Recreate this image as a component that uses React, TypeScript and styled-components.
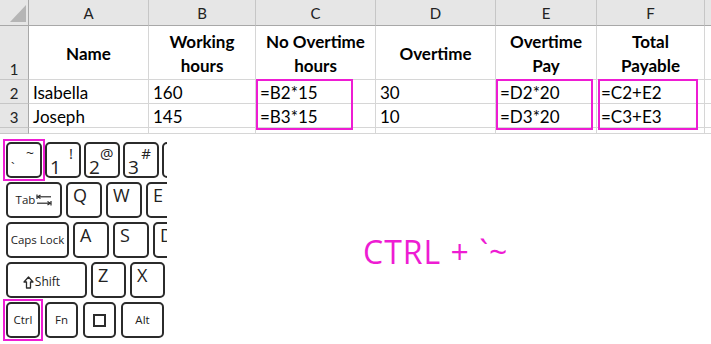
import React from 'react';
import styled, { createGlobalStyle, css } from 'styled-components';

const PINK = '#ee1cd3';
const GRID = '#d6d6d6';
const HEAD_BG = '#e6e6e6';
const HEAD_EDGE = '#a8a8a8';
const HEAD_LINE = '#c6c6c6';

const GlobalStyle = createGlobalStyle`
  html, body {
    margin: 0;
    padding: 0;
    background: #fff;
  }
  * {
    box-sizing: border-box;
  }
`;

const Page = styled.div`
  width: 711px;
  height: 344px;
  overflow: hidden;
  background: #fff;
  display: flex;
  flex-direction: column;
`;

/* ---------- spreadsheet ---------- */

const Sheet = styled.div`
  display: grid;
  grid-template-columns: 29px 120px 107px 120px 120px 101px 108px 1fr;
  grid-template-rows: 26px 54px 24px 24px 6px;
  font-family: Lato, 'Liberation Sans', sans-serif;
  color: #000;
`;

interface Placed {
  $row: number | string;
  $col: number | string;
}

const placed = css<Placed>`
  grid-row: ${p => p.$row};
  grid-column: ${p => p.$col};
`;

const Corner = styled.div`
  grid-row: 1;
  grid-column: 1;
  background: ${HEAD_BG};
  border-right: 1px solid ${HEAD_EDGE};
  border-bottom: 1px solid ${HEAD_EDGE};
  display: flex;
  align-items: flex-end;
  justify-content: flex-end;
  padding: 0 2px 3px 0;
`;

const ColHead = styled.div<Placed>`
  ${placed};
  background: ${HEAD_BG};
  border-right: 1px solid ${HEAD_LINE};
  border-bottom: 1px solid ${HEAD_EDGE};
  display: flex;
  align-items: center;
  justify-content: center;
  padding-top: 2px;
  font-size: 15px;
  line-height: 1;
  color: #222;
`;

const RowHead = styled.div<Placed>`
  ${placed};
  background: ${HEAD_BG};
  border-right: 1px solid ${HEAD_EDGE};
  border-bottom: 1px solid ${HEAD_LINE};
  display: flex;
  align-items: flex-end;
  justify-content: center;
  font-size: 15px;
  line-height: 20px;
  color: #222;
`;

const Cell = styled.div<Placed & { $head?: boolean }>`
  ${placed};
  border-right: 1px solid ${GRID};
  border-bottom: 1px solid ${GRID};
  padding: 0 4px;
  display: flex;
  font-size: 17px;
  white-space: nowrap;
  overflow: hidden;
  ${p =>
    p.$head
      ? css`
          align-items: center;
          justify-content: center;
          text-align: center;
          font-weight: 700;
          line-height: 24px;
          padding-top: 3px;
        `
      : css`
          align-items: flex-end;
          line-height: 20px;
        `}
`;

const Highlight = styled.div<{ $col: number; $width: number; $shift?: number }>`
  grid-column: ${p => p.$col};
  grid-row: 3 / 5;
  justify-self: start;
  align-self: start;
  width: ${p => p.$width}px;
  height: 51px;
  margin: -1px 0 0 ${p => p.$shift ?? 0}px;
  border: 2px solid ${PINK};
  z-index: 1;
  pointer-events: none;
`;

/* ---------- keyboard ---------- */

const Lower = styled.div`
  flex: 1;
  display: flex;
`;

const Keyboard = styled.div`
  width: 167px;
  flex-shrink: 0;
  overflow: hidden;
  padding: 8px 0 0 6px;
  display: flex;
  flex-direction: column;
  gap: 4px;
  font-family: 'Open Sans', 'DejaVu Sans', sans-serif;
  color: #222;
`;

const KeyRow = styled.div<{ $gap: number }>`
  display: flex;
  gap: ${p => p.$gap}px;
  height: 36px;
`;

type KeyLayout = 'dual' | 'letter' | 'center';

const Key = styled.div<{ $w: number; $layout: KeyLayout }>`
  flex: 0 0 ${p => p.$w}px;
  width: ${p => p.$w}px;
  height: 36px;
  border: 2px solid #2b2b2b;
  border-radius: 5px;
  background: #fff;
  display: flex;
  line-height: 1;
  ${p =>
    p.$layout === 'dual' &&
    css`
      justify-content: space-between;
      padding: 2px 6px 1px 3px;
    `}
  ${p =>
    p.$layout === 'letter' &&
    css`
      align-items: flex-start;
      padding: 2px 0 0 5px;
      font-size: 18px;
      font-weight: 500;
    `}
  ${p =>
    p.$layout === 'center' &&
    css`
      align-items: center;
      justify-content: center;
      gap: 1px;
      font-size: 11.5px;
      font-weight: 500;
    `}
`;

const Marked = styled.div`
  margin: -3px;
  padding: 1px;
  border: 2px solid ${PINK};
  display: flex;
  flex-shrink: 0;
`;

// shifted symbol, top-right of a number key
const UpperGlyph = styled.span<{ $size?: number }>`
  align-self: flex-start;
  font-size: ${p => p.$size ?? 15}px;
  line-height: 14px;
  font-weight: 500;
`;

// plain digit, bottom-left of a number key
const LowerGlyph = styled.span<{ $size?: number }>`
  align-self: flex-end;
  font-size: ${p => p.$size ?? 19}px;
  line-height: 15px;
  font-weight: 500;
`;

const ShiftLabel = styled.span`
  display: flex;
  align-items: center;
  gap: 1px;
  font-size: 12px;
  padding: 4px 10px 0 0;
`;

const WinSquare = styled.span`
  width: 13px;
  height: 13px;
  border: 2px solid #2b2b2b;
`;

const Caption = styled.div`
  flex: 1;
  padding: 102px 0 0 196px;
  font-family: 'Open Sans', 'Liberation Sans', sans-serif;
  font-size: 32px;
  letter-spacing: 1px;
  line-height: 1;
  color: ${PINK};
  white-space: nowrap;
`;

/* ---------- data ---------- */

const letters = ['A', 'B', 'C', 'D', 'E', 'F'];

const headings: string[][] = [
  ['Name'],
  ['Working', 'hours'],
  ['No Overtime', 'hours'],
  ['Overtime'],
  ['Overtime', 'Pay'],
  ['Total', 'Payable'],
];

const rows: string[][] = [
  ['Isabella', '160', '=B2*15', '30', '=D2*20', '=C2+E2'],
  ['Joseph', '145', '=B3*15', '10', '=D3*20', '=C3+E3'],
];

const TabArrows = () => (
  <svg width="16" height="12" viewBox="0 0 16 12" fill="none" stroke="#2b2b2b" strokeWidth="1.2">
    <line x1="1" y1="0.5" x2="1" y2="5" />
    <line x1="1.5" y1="2.8" x2="15" y2="2.8" />
    <polyline points="4.5,1 1.8,2.8 4.5,4.6" />
    <line x1="15" y1="7" x2="15" y2="11.5" />
    <line x1="1" y1="9.2" x2="14.5" y2="9.2" />
    <polyline points="11.5,7.4 14.2,9.2 11.5,11" />
  </svg>
);

const ShiftArrow = () => (
  <svg width="11" height="13" viewBox="0 0 11 13" fill="none" stroke="#2b2b2b" strokeWidth="1.3" strokeLinejoin="round">
    <path d="M5.5 1 L10 6 H7.5 V12 H3.5 V6 H1 Z" />
  </svg>
);

const CornerMark = () => (
  <svg width="16" height="17" viewBox="0 0 16 17">
    <polygon points="16,0 16,17 0,17" fill="#b5b5b5" />
  </svg>
);

const App: React.FC = () => {
  return (
    <Page>
      <GlobalStyle />
      <Sheet>
        <Corner>
          <CornerMark />
        </Corner>
        {letters.map((l, i) => (
          <ColHead key={l} $row={1} $col={i + 2}>
            {l}
          </ColHead>
        ))}
        <ColHead $row={1} $col={8} />

        {[1, 2, 3, 4].map(n => (
          <RowHead key={n} $row={n + 1} $col={1}>
            {n < 4 ? n : ''}
          </RowHead>
        ))}

        {headings.map((lines, i) => (
          <Cell key={i} $head $row={2} $col={i + 2}>
            <span>
              {lines.map((line, j) => (
                <React.Fragment key={j}>
                  {j > 0 && <br />}
                  {line}
                </React.Fragment>
              ))}
            </span>
          </Cell>
        ))}
        <Cell $row={2} $col={8} />

        {rows.map((row, r) => (
          <React.Fragment key={r}>
            {row.map((value, c) => (
              <Cell key={c} $row={r + 3} $col={c + 2}>
                {value}
              </Cell>
            ))}
            <Cell $row={r + 3} $col={8} />
          </React.Fragment>
        ))}
        {[2, 3, 4, 5, 6, 7, 8].map(c => (
          <Cell key={c} $row={5} $col={c} />
        ))}

        <Highlight $col={4} $width={97} />
        <Highlight $col={6} $width={97} />
        <Highlight $col={7} $width={100} $shift={1} />
      </Sheet>

      <Lower>
        <Keyboard>
          <KeyRow $gap={3}>
            <Marked>
              <Key $w={36} $layout="dual">
                <LowerGlyph $size={13}>`</LowerGlyph>
                <UpperGlyph $size={14}>~</UpperGlyph>
              </Key>
            </Marked>
            <Key $w={36} $layout="dual">
              <LowerGlyph>1</LowerGlyph>
              <UpperGlyph>!</UpperGlyph>
            </Key>
            <Key $w={36} $layout="dual">
              <LowerGlyph>2</LowerGlyph>
              <UpperGlyph>@</UpperGlyph>
            </Key>
            <Key $w={36} $layout="dual">
              <LowerGlyph>3</LowerGlyph>
              <UpperGlyph>#</UpperGlyph>
            </Key>
            {/* only the left edge of the next key shows */}
            <Key $w={36} $layout="dual" />
          </KeyRow>

          <KeyRow $gap={4}>
            <Key $w={56} $layout="center">
              Tab
              <TabArrows />
            </Key>
            <Key $w={36} $layout="letter">Q</Key>
            <Key $w={36} $layout="letter">W</Key>
            <Key $w={36} $layout="letter">E</Key>
          </KeyRow>

          <KeyRow $gap={4}>
            <Key $w={63} $layout="center">Caps Lock</Key>
            <Key $w={36} $layout="letter">A</Key>
            <Key $w={36} $layout="letter">S</Key>
            <Key $w={36} $layout="letter">D</Key>
          </KeyRow>

          <KeyRow $gap={4}>
            <Key $w={81} $layout="center">
              <ShiftLabel>
                <ShiftArrow />
                Shift
              </ShiftLabel>
            </Key>
            <Key $w={35} $layout="letter">Z</Key>
            <Key $w={35} $layout="letter">X</Key>
          </KeyRow>

          <KeyRow $gap={5}>
            <Marked>
              <Key $w={34} $layout="center">Ctrl</Key>
            </Marked>
            <Key $w={33} $layout="center">Fn</Key>
            <Key $w={33} $layout="center">
              <WinSquare />
            </Key>
            <Key $w={43} $layout="center">Alt</Key>
          </KeyRow>
        </Keyboard>

        <Caption>CTRL + `~</Caption>
      </Lower>
    </Page>
  );
};

export default App;
